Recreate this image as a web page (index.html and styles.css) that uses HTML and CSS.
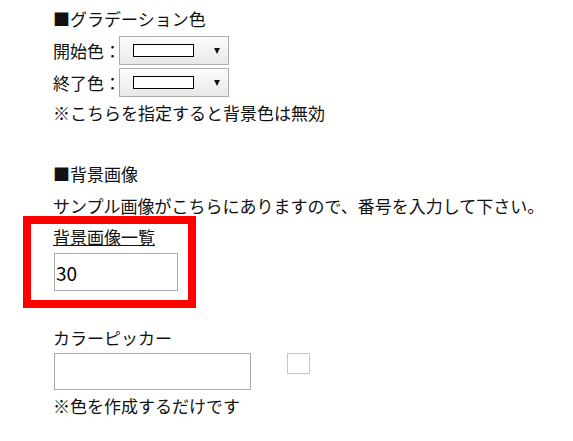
FILE: index.html
```html
<!DOCTYPE html>
<html lang="ja">
<head>
<meta charset="utf-8">
<title>設定</title>
<link rel="stylesheet" href="styles.css">
</head>
<body>
<div class="page">
  <div class="title t1">■グラデーション色</div>
  <div class="sel-row r1">
    <span class="sel-label">開始色：</span>
    <div class="fake-select"><span class="swatch"></span><span class="arrow"></span></div>
  </div>
  <div class="sel-row r2">
    <span class="sel-label">終了色：</span>
    <div class="fake-select"><span class="swatch"></span><span class="arrow"></span></div>
  </div>
  <div class="text note1">※こちらを指定すると背景色は無効</div>

  <div class="title t2">■背景画像</div>
  <div class="text sample">サンプル画像がこちらにありますので、番号を入力して下さい。</div>
  <div class="highlight">
    <a class="list-link" href="#">背景画像一覧</a>
    <input class="num-input" type="text" value="30">
  </div>

  <div class="text picker-label">カラーピッカー</div>
  <div class="picker-row">
    <input class="picker-input" type="text" value="">
    <span class="picker-swatch"></span>
  </div>
  <div class="text note2">※色を作成するだけです</div>
</div>
</body>
</html>
```

FILE: styles.css
```css
html, body {
  margin: 0;
  padding: 0;
  background: #fff;
}

body {
  font-family: "Noto Sans CJK JP", "Noto Sans", sans-serif;
  font-size: 17px;
  color: #111;
}

.page {
  display: flex;
  flex-direction: column;
  align-items: flex-start;
  padding-left: 53px;
}

.title,
.text {
  line-height: 22px;
  white-space: nowrap;
}

.t1 { margin-top: 8px; }

.sel-row {
  display: flex;
  align-items: center;
  height: 29px;
}
.r1 { margin-top: 6px; }
.r2 { margin-top: 3px; }

.sel-label {
  width: 66px;
  line-height: 22px;
  white-space: nowrap;
}

.fake-select {
  box-sizing: border-box;
  width: 110px;
  height: 29px;
  border: 1px solid #adadad;
  background: linear-gradient(#fdfdfd, #e8e8e8);
  display: flex;
  align-items: center;
  padding-left: 13px;
}

.swatch {
  box-sizing: border-box;
  width: 61px;
  height: 13px;
  border: 1px solid #000;
  background: #fff;
}

.arrow {
  width: 0;
  height: 0;
  margin-left: 20px;
  border-left: 3.5px solid transparent;
  border-right: 3.5px solid transparent;
  border-top: 6px solid #111;
}

.note1 { margin-top: 5px; }
.t2 { margin-top: 39px; }
.sample { margin-top: 12px; line-height: 18px; }

.highlight {
  box-sizing: border-box;
  width: 173px;
  margin-top: 1px;
  margin-left: -30px;
  border: 8px solid #ff0000;
  padding: 2px 0 9px 22px;
  display: flex;
  flex-direction: column;
  align-items: flex-start;
}

.list-link {
  color: #111;
  text-decoration: underline;
  line-height: 22px;
  white-space: nowrap;
}

.num-input {
  box-sizing: border-box;
  margin: 5px 0 0 1px;
  width: 124px;
  height: 38px;
  border: 1px solid #a9a9a9;
  padding: 0 0 0 1px;
  font-family: "Noto Sans CJK JP", "Noto Sans", sans-serif;
  font-size: 19px;
  color: #000;
  outline: none;
}

.picker-label { margin-top: 19px; }

.picker-row {
  display: flex;
  align-items: flex-start;
  gap: 36px;
  margin-top: 4px;
  margin-left: 1px;
}

.picker-input {
  box-sizing: border-box;
  margin: 0;
  width: 197px;
  height: 37px;
  border: 1px solid #a9a9a9;
  padding: 0 2px;
  font-family: "Noto Sans CJK JP", "Noto Sans", sans-serif;
  font-size: 17px;
  outline: none;
}

.picker-swatch {
  box-sizing: border-box;
  width: 23px;
  height: 21px;
  border: 1px solid #c6c6c6;
  background: #fff;
}

.note2 { margin-top: 5px; }
```
